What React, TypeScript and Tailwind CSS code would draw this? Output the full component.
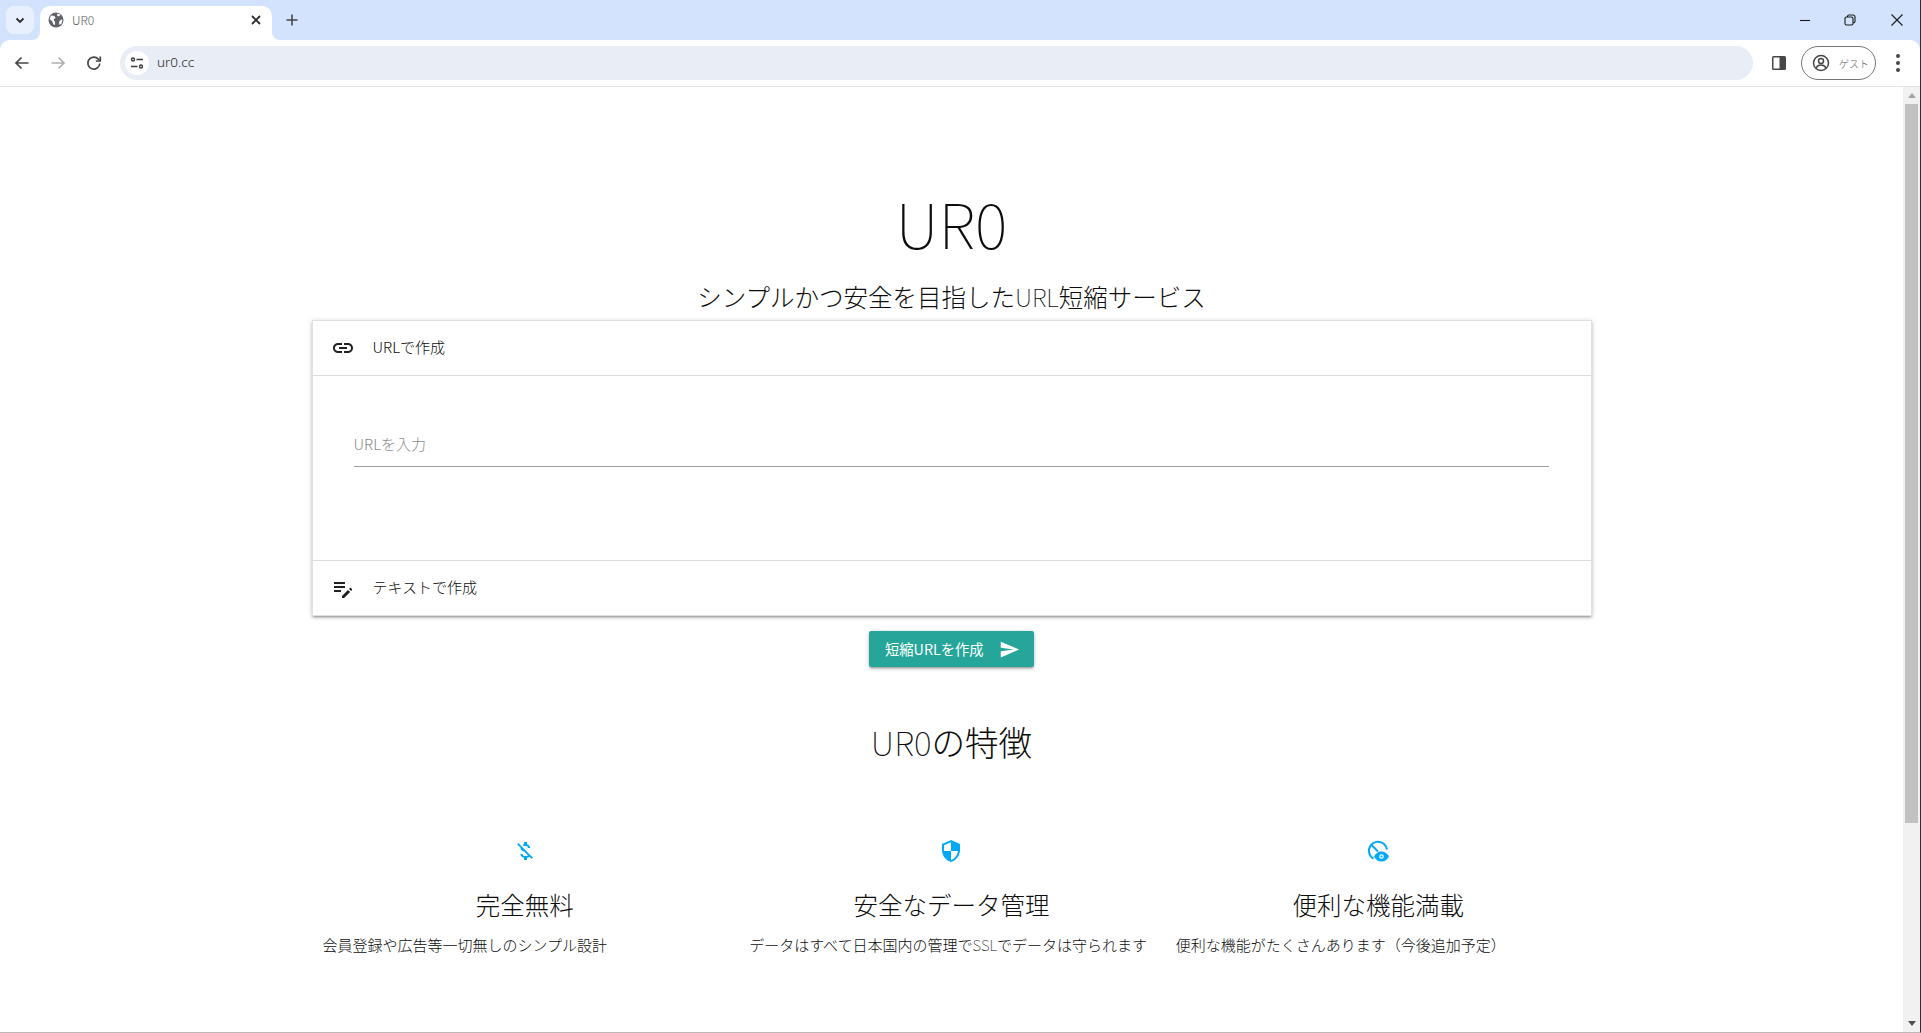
import React from 'react'

const jp = "font-['Noto_Sans_CJK_JP','Noto_Sans',sans-serif]"

function Mi({ d, className }: { d: string; className?: string }) {
  return (
    <svg viewBox="0 0 24 24" fill="currentColor" className={className}>
      <path d={d} />
    </svg>
  )
}

const icons = {
  link: 'M3.9 12c0-1.71 1.39-3.1 3.1-3.1h4V7H7c-2.76 0-5 2.24-5 5s2.24 5 5 5h4v-1.9H7c-1.71 0-3.1-1.39-3.1-3.1zM8 13h8v-2H8v2zm9-6h-4v1.9h4c1.71 0 3.1 1.39 3.1 3.1s-1.39 3.1-3.1 3.1h-4V17h4c2.76 0 5-2.24 5-5s-2.24-5-5-5z',
  note: 'M3 10h11v2H3v-2zm0-2h11V6H3v2zm0 8h7v-2H3v2zm15.01-3.13l.71-.71c.39-.39 1.02-.39 1.41 0l.71.71c.39.39.39 1.02 0 1.41l-.71.71-2.12-2.12zm-1.06 1.06L11 19.88V22h2.12l6-6-2.17-2.07z',
  send: 'M2.01 21L23 12 2.01 3 2 10l15 2-15 2z',
  money: 'M12.5 6.9c1.78 0 2.44.85 2.5 2.1h2.21c-.07-1.72-1.12-3.3-3.21-3.81V3h-3v2.16c-.53.12-1.03.3-1.48.54l1.47 1.47c.41-.17.91-.27 1.51-.27zM5.33 4.06L4.06 5.33 7.5 8.77c0 2.08 1.56 3.21 3.91 3.91l3.51 3.51c-.34.48-1.05.91-2.42.91-2.06 0-2.87-.92-2.98-2.1h-2.2c.12 2.19 1.76 3.42 3.68 3.83V21h3v-2.15c.96-.18 1.82-.55 2.45-1.12l2.22 2.22 1.27-1.27L5.33 4.06z',
  security: 'M12 1L3 5v6c0 5.55 3.84 10.74 9 12 5.16-1.26 9-6.45 9-12V5l-9-4zm0 10.99h7c-.53 4.12-3.28 7.79-7 8.94V12H5V6.3l7-3.11v8.8z',
}

function GlobeEye({ className }: { className?: string }) {
  return (
    <svg viewBox="0 0 24 24" className={className}>
      <path d="M7.5 19.6A9 9 0 1 1 20.9 10.6" fill="none" stroke="currentColor" strokeWidth="2" />
      <path d="M5 5.5l7 7" fill="none" stroke="currentColor" strokeWidth="2" />
      <path d="M8 17.5c1.4-3 4.2-5 7.5-5s6.1 2 7.5 5c-1.4 3-4.2 5-7.5 5s-6.100-2-7.500-5z" fill="currentColor" />
      <circle cx="15.500" cy="17.500" r="2.300" fill="#fff" />
      <circle cx="15.500" cy="17.500" r="1.100" fill="currentColor" />
    </svg>
  )
}

function ChromeBar() {
  return (
    <div className="shrink-0 bg-[#d3e3fd]">
      <div className="h-10 flex items-end relative">
        <div className="absolute left-[6px] top-[6px] w-[28px] h-[28px] rounded-lg bg-[#e9f0fd] flex items-center justify-center">
          <svg viewBox="0 0 16 16" className="w-4 h-4 text-[#2c2c2c]" fill="none" stroke="currentColor" strokeWidth="1.800">
            <path d="M4.500 6.500L8 10l3.500-3.500" />
          </svg>
        </div>
        <div className="ml-10 w-[232px] h-[34px] bg-white rounded-t-[10px] relative flex items-center pl-[8px] pr-[9px]">
          <svg viewBox="0 0 16 16" className="w-[16px] h-[16px] -mt-[6px]">
            <circle cx="8" cy="8" r="7.500" fill="#5f6368" />
            <path d="M3 3.500l3.500 0.500 1 2-2 1.500 1.500 2.500 0 3-1.500-0.500-1.500-3.500-2.500-2zM9.500 1.500l3 1-1.500 2-2-1zM13 7.500l1.500 0.500-1 3.500-2 1.500-0.500-3z" fill="#fff" />
          </svg>
          <span className="ml-[8px] text-[12px] text-[#5c5c5c] font-light -mt-[6px]">UR0</span>
          <svg viewBox="0 0 16 16" className="absolute right-[8px] top-[6px] w-4 h-4 text-[#2c2c2c]" fill="none" stroke="currentColor" strokeWidth="1.800">
            <path d="M4 4l8 8M12 4l-8 8" />
          </svg>
          <svg viewBox="0 0 8 8" className="absolute -left-[8px] bottom-0 w-2 h-2 text-white" fill="currentColor">
            <path d="M8 0v8H0c4.400 0 8-3.600 8-8z" />
          </svg>
          <svg viewBox="0 0 8 8" className="absolute -right-[8px] bottom-0 w-2 h-2 text-white" fill="currentColor">
            <path d="M0 0v8h8C3.600 8 0 4.400 0 0z" />
          </svg>
        </div>
        <svg viewBox="0 0 16 16" className="absolute left-[284px] top-[12px] w-4 h-4 text-[#474747]" fill="none" stroke="currentColor" strokeWidth="1.600">
          <path d="M8 2.500v11M2.500 8h11" />
        </svg>
        <div className="absolute right-[15px] top-[12px] flex items-center gap-[31px] text-[#1a1a1a]">
          <svg viewBox="0 0 16 16" className="w-4 h-4" fill="none" stroke="currentColor" strokeWidth="1.100"><path d="M5 8.500h10" /></svg>
          <svg viewBox="0 0 16 16" className="w-4 h-4" fill="none" stroke="currentColor" strokeWidth="1.100"><rect x="3" y="5" width="8" height="8" rx="1.500" /><path d="M5.500 5V4.500c0-1 .500-1.500 1.500-1.500h4c1 0 2 1 2 2v4.500c0 1-.500 1.500-2 1.500" /></svg>
          <svg viewBox="0 0 16 16" className="w-4 h-4" fill="none" stroke="currentColor" strokeWidth="1.100"><path d="M2.500 2.500l11 11M13.500 2.500l-11 11" /></svg>
        </div>
      </div>
      <div className="h-[46px] bg-white rounded-t-[10px] flex items-center pl-[13px] pr-[20px] gap-0">
        <svg viewBox="0 0 18 18" className="w-[18px] h-[18px] text-[#474747]" fill="none" stroke="currentColor" strokeWidth="1.700"><path d="M15.500 9h-12M8.500 3.500L3 9l5.500 5.500" /></svg>
        <svg viewBox="0 0 18 18" className="ml-[18px] w-[18px] h-[18px] text-[#b0b0b0]" fill="none" stroke="currentColor" strokeWidth="1.700"><path d="M2.500 9h12M9.500 3.500L15 9l-5.500 5.500" /></svg>
        <svg viewBox="0 0 18 18" className="ml-[18px] w-[18px] h-[18px] text-[#474747]" fill="none" stroke="currentColor" strokeWidth="1.700">
          <path d="M14.800 9.500a6 6 0 1 1-1.500-4.400L15 7" />
          <path d="M15.300 2.500V7h-4.500" />
        </svg>
        <div className="ml-[17px] flex-1 h-[34px] rounded-full bg-[#e9edf6] flex items-center pl-[5px]">
          <div className="w-6 h-6 rounded-full bg-white flex items-center justify-center">
            <svg viewBox="0 0 14 14" className="w-[14px] h-[14px] text-[#3c3c3c]" fill="none" stroke="currentColor" strokeWidth="1.400">
              <circle cx="3" cy="3.500" r="1.500" /><path d="M6.500 3.500H13M1 10.500h6.500" /><circle cx="11" cy="10.500" r="1.500" />
            </svg>
          </div>
          <span className="ml-[8px] -mt-px text-[13.500px] text-[#1f1f1f] font-['Noto_Sans',sans-serif] font-light">ur0.cc</span>
        </div>
        <svg viewBox="0 0 16 16" className="ml-[18px] w-4 h-4 text-[#474747]">
          <rect x="1" y="1" width="14" height="14" rx="1.500" fill="currentColor" />
          <rect x="2.500" y="2.500" width="6" height="11" fill="#fff" />
        </svg>
        <div className="ml-[14px] w-[75px] h-[34px] rounded-full border border-[#747775] flex items-center pl-[10px]">
          <svg viewBox="0 0 18 18" className="w-[18px] h-[18px] text-[#474747]" fill="none" stroke="currentColor" strokeWidth="1.500">
            <circle cx="9" cy="9" r="7.500" /><circle cx="9" cy="7" r="2.500" /><path d="M4 14c1-2 3-3 5-3s4 1 5 3" />
          </svg>
          <span className={`ml-[9px] text-[10px] text-[#5c5c5c] font-light ${jp}`}>ゲスト</span>
        </div>
        <div className="ml-[20px] w-1 flex flex-col gap-[3px]">
          <span className="w-1 h-1 rounded-full bg-[#474747]" />
          <span className="w-1 h-1 rounded-full bg-[#474747]" />
          <span className="w-1 h-1 rounded-full bg-[#474747]" />
        </div>
      </div>
      <div className="h-px bg-[#e3e3e3]" />
    </div>
  )
}

function Feature({ icon, title, desc }: { icon: React.ReactNode; title: string; desc: React.ReactNode }) {
  return (
    <div className="flex flex-col">
      <div className="h-6 flex justify-center text-[#03a9f9]">{icon}</div>
      <h3 className="mt-[26px] text-center text-[24.500px] leading-8 font-light">{title}</h3>
      <p className="mt-[13px] pl-[11px] text-[15px] leading-[22px] font-light whitespace-nowrap">{desc}</p>
    </div>
  )
}

export default function App() {
  return (
    <div className={`h-[1033px] w-full flex flex-col overflow-hidden bg-white border-b border-[#bdb6bb] border-r border-r-[#2b3038] ${jp}`}>
      <ChromeBar />
      <div className="flex-1 flex min-h-0">
        <main className="flex-1 flex flex-col items-center text-[#0c0c0c]">
          <h1 className="mt-[95px] text-[62px] leading-[80px] font-thin">UR0</h1>
          <h2 className="mt-[19px] text-[24.500px] leading-8 font-light">シンプルかつ安全を目指した<span className="font-thin">URL</span>短縮サービス</h2>
          <div className="mt-[7px] w-[1280px] bg-white border border-[#e0e0e0] shadow-[0_2px_2px_0_rgba(0,0,0,0.14),0_3px_1px_-2px_rgba(0,0,0,0.12),0_1px_5px_0_rgba(0,0,0,0.2)]">
            <div className="h-[55px] flex items-center pl-[18px] border-b border-[#dddddd]">
              <Mi d={icons.link} className="w-6 h-6 text-[#212121]" />
              <span className="ml-[18px] -mt-[2px] text-[15px] font-light">URLで作成</span>
            </div>
            <div className="h-[185px] pt-[46px] pl-[41px] pr-[42px] border-b border-[#dddddd]">
              <div className="h-[45px] flex items-center border-b border-[#9e9e9e] text-[15px] font-light text-[#8a8a8a]">URLを入力</div>
            </div>
            <div className="h-[54px] flex items-center pl-[18px]">
              <Mi d={icons.note} className="w-6 h-6 text-[#212121]" />
              <span className="ml-[18px] -mt-[2px] text-[15px] font-light">テキストで作成</span>
            </div>
          </div>
          <button className="mt-[15px] h-9 w-[165px] rounded-[2px] bg-[#26a69a] text-white text-[14.300px] flex items-center pl-4 shadow-[0_2px_2px_0_rgba(0,0,0,0.14),0_3px_1px_-2px_rgba(0,0,0,0.12),0_1px_5px_0_rgba(0,0,0,0.2)]">
            <span className="-mt-px">短縮URLを作成</span>
            <Mi d={icons.send} className="ml-[15px] w-[21px] h-[21px]" />
          </button>
          <h2 className="mt-[53px] text-[33.600px] leading-[44px] font-light"><span className="font-thin">UR0</span>の特徴</h2>
          <div className="mt-[75px] w-[1280px] grid grid-cols-3">
            <Feature icon={<Mi d={icons.money} className="w-6 h-6" />} title="完全無料" desc="会員登録や広告等一切無しのシンプル設計" />
            <Feature icon={<Mi d={icons.security} className="w-6 h-6" />} title="安全なデータ管理" desc={<>データはすべて日本国内の管理で<span className="font-thin">SSL</span>でデータは守られます</>} />
            <Feature icon={<GlobeEye className="w-6 h-6" />} title="便利な機能満載" desc="便利な機能がたくさんあります（今後追加予定）" />
          </div>
        </main>
        <div className="w-[17px] shrink-0 bg-[#f1f1f1] flex flex-col items-center">
          <div className="h-[17px] flex items-center justify-center">
            <div className="w-0 h-0 border-x-[4px] border-x-transparent border-b-[5px] border-b-[#a3a3a3]" />
          </div>
          <div className="w-[13px] h-[719px] bg-[#c1c1c1]" />
          <div className="mt-auto h-[17px] flex items-center justify-center">
            <div className="w-0 h-0 border-x-[4px] border-x-transparent border-t-[5px] border-t-[#505050]" />
          </div>
        </div>
      </div>
    </div>
  )
}
